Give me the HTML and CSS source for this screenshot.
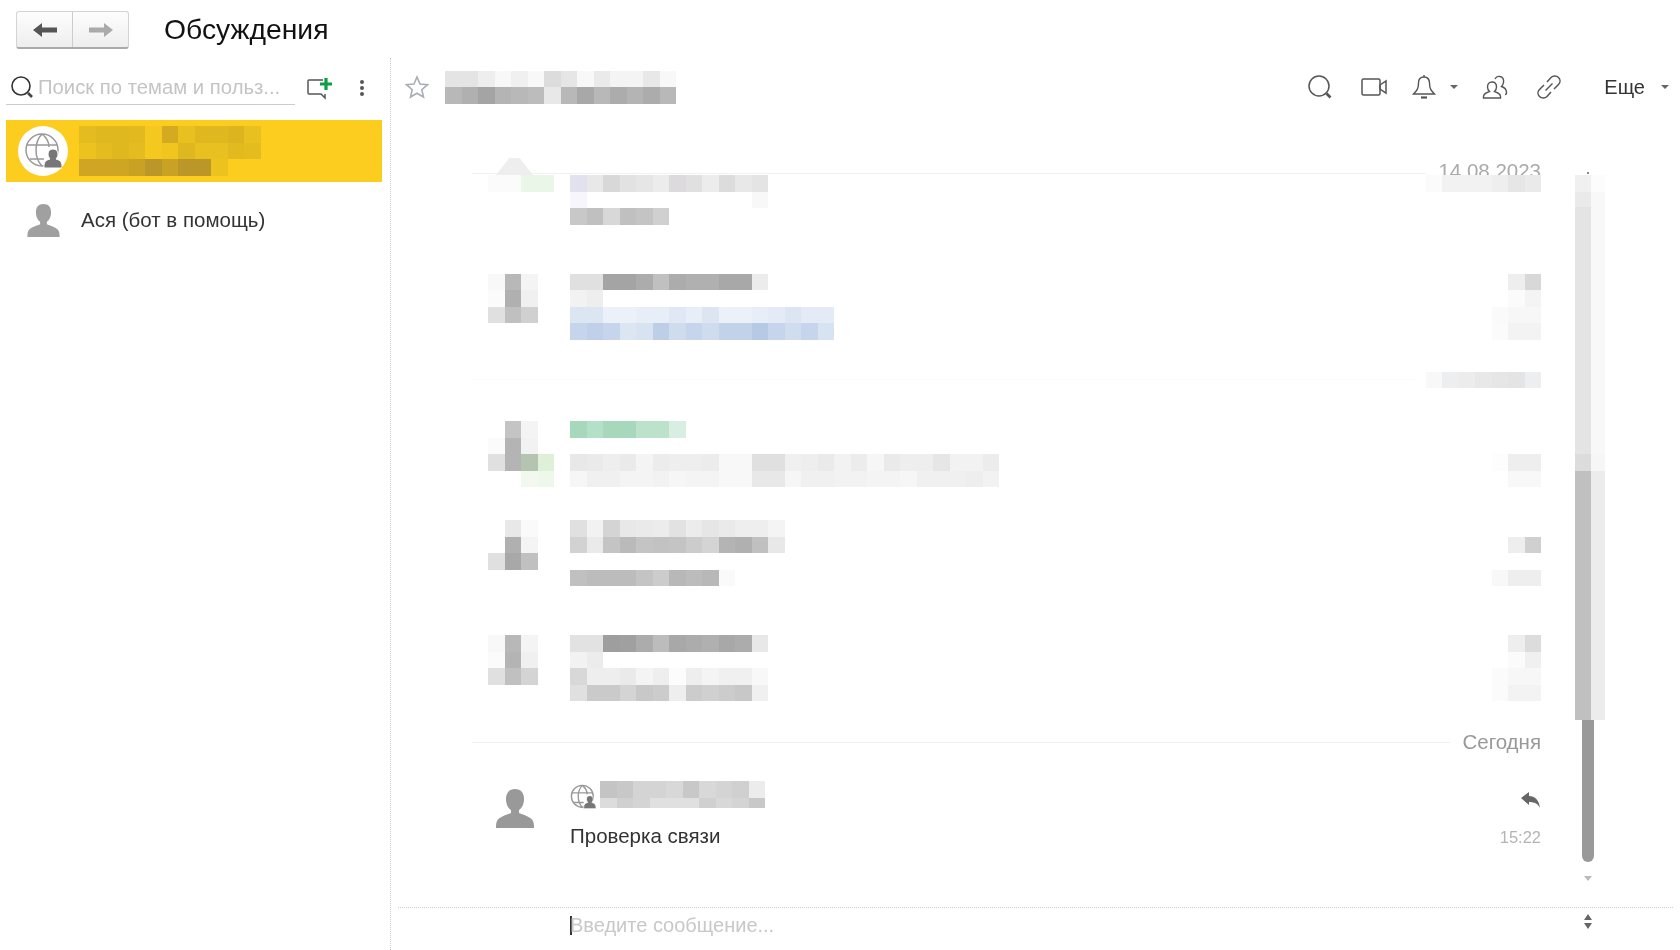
FILE: index.html
```html
<!DOCTYPE html>
<html lang="ru">
<head>
  <meta charset="UTF-8" />
  <title>Обсуждения</title>
  <link rel="stylesheet" href="styles.css">
</head>
<body>
  <header class="topbar">
    <div class="nav-buttons">
      <button class="nav-btn">
        <svg width="26" height="18" viewBox="0 0 26 18"><path d="M1 9l9-7v4.500h15v5H10V16z" fill="#555"/></svg>
      </button>
      <button class="nav-btn">
        <svg width="26" height="18" viewBox="0 0 26 18"><path d="M25 9l-9-7v4.500H1v5h15V16z" fill="#aaa"/></svg>
      </button>
    </div>
    <h1 class="title">Обсуждения</h1>
  </header>

  <div class="layout">
    <aside class="sidebar">
      <div class="search-row">
        <div class="search">
          <svg width="24" height="24" viewBox="0 0 24 24" fill="none"><circle cx="11" cy="11" r="9" stroke="#333" stroke-width="1.600"/><path d="M18 18l4 4" stroke="#444" stroke-width="2.600"/></svg>
          <span class="placeholder">Поиск по темам и польз...</span>
        </div>
        <svg class="new-chat" width="28" height="28" viewBox="0 0 28 28" fill="none"><path d="M17 6H3a1 1 0 0 0-1 1v12a1 1 0 0 0 1 1h12l4 4v-4" stroke="#555" stroke-width="1.500"/><path d="M20 4v12M14 10h12" stroke="#0f9d48" stroke-width="3.200"/></svg>
        <svg class="dots" width="6" height="18" viewBox="0 0 6 18"><circle cx="3" cy="3" r="2" fill="#555"/><circle cx="3" cy="9" r="2" fill="#555"/><circle cx="3" cy="15" r="2" fill="#555"/></svg>
      </div>

      <div class="chat-item selected">
        <div class="globe-circle">
          <svg width="38" height="38" viewBox="0 0 38 38" fill="none" stroke="#999" stroke-width="1.500"><circle cx="18" cy="18" r="16"/><path d="M3 13h30M6 27h14M18 2c-8 8-8 24 0 32M18 2c5 4 7 9 7 13"/><path d="M29 17c-3 0-5 2-5 5 0 2 1 4 2 5-3 1-6 2-6 7v2h18v-2c0-5-3-6-6-7 1-1 2-3 2-5 0-3-2-5-5-5z" fill="#777" stroke="#fff" stroke-width="1"/></svg>
        </div>
        <div class="mosaic" data-cells="e4bc20 dfb820 dfb820 e2ba20 f4c81e d4aa20 e8c020 dfb820 dfb820 dcb420 e8c020|ecc21f e4bc20 dfb820 e4bc20 f4c81e f0c61e dfb820 e8c020 e8c020 e2ba20 e4bc20|cfa624 cfa624 cfa624 c9a125 bb9628 c9a125 bb9628 bb9628 ecc21f"></div>
      </div>

      <div class="chat-item">
        <svg class="person" width="33" height="33" viewBox="0 0 38 39"><path d="M19 0c-6 0-9 4-9 10 0 5 2 9 5 11v3c-5 2-12 4-14 8-1 2-1 5-1 7h38c0-2 0-5-1-7-2-4-9-6-14-8v-3c3-2 5-6 5-11 0-6-3-10-9-10z" fill="#a0a0a0"/></svg>
        <span class="chat-name">Ася (бот в помощь)</span>
      </div>
    </aside>

    <main class="chat">
      <div class="chat-toolbar">
        <svg class="star" width="24" height="24" viewBox="0 0 24 24"><path d="M12 2l3 7 7.500.7-5.700 5 1.700 7.300L12 18.200 5.500 22l1.700-7.300-5.700-5L9 9z" fill="none" stroke="#a9adb5" stroke-width="1.600"/></svg>
        <div class="mosaic" data-cells="e4 e4 ee f8 f0 f8 dc e6 f8 ea f4 f4 e8 f8|b8 b0 a4 b4 b8 bc e8 b8 a8 b8 ac b4 ac b8"></div>

        <div class="tools">
          <svg class="tool" width="26" height="26" viewBox="0 0 26 26" fill="none"><circle cx="12" cy="12" r="10" stroke="#555" stroke-width="1.500"/><path d="M19.500 19.500l4 4" stroke="#555" stroke-width="2.600"/></svg>
          <svg class="tool" width="26" height="26" viewBox="0 0 26 26" fill="none" stroke="#555" stroke-width="1.500"><rect x="1" y="5" width="18" height="16" rx="1.500"/><path d="M19 11l6-4v12l-6-4z"/></svg>
          <svg class="tool tool-bell" width="26" height="26" viewBox="0 0 26 26" fill="none" stroke="#555" stroke-width="1.400"><path d="M13 3c-3.500 0-5.500 2.500-5.500 6 0 6-2 8-5 11h21c-3-3-5-5-5-11 0-3.500-2-6-5.500-6z"/><path d="M13 1v2"/><path d="M10 23.500h6" stroke-width="2.200"/></svg>
          <span class="caret caret-bell"></span>
          <svg class="tool tool-users" width="26" height="26" viewBox="0 0 26 26" fill="none" stroke="#555" stroke-width="1.400"><path d="M10 8c-3 0-4.500 2-4.500 5 0 2 1 3.500 2 4.500-3 1-6 2-6 5v1.500h17V22.500c0-3-3-4-6-5 1-1 2-2.500 2-4.500 0-3-1.500-5-4.500-5z"/><path d="M13 5c1-2 3-3 5-2.500 3 .5 4 3 3.500 6-.3 2-1 3-2 4 3 1 5 3 5 6 0 1-.5 2-1.500 2"/></svg>
          <svg class="tool tool-link" width="26" height="26" viewBox="0 0 26 26" fill="none" stroke="#555" stroke-width="1.500"><path d="M11 8l4-4.500c2-2 5.500-2 7.500 0s2 5 0 7L18 15"/><path d="M15 18l-4 4.500c-2 2-5.500 2-7.500 0s-2-5 0-7L8 11"/><path d="M9.500 16.500l7-7"/></svg>
          <span class="more">Еще</span>
          <span class="caret caret-more"></span>
        </div>
      </div>

      <div class="chat-body">
        <div class="messages">
          <div class="date-row first">
            <span class="date-line"></span>
            <span class="date-label">14.08.2023</span>
            <span class="avatar-top"></span>
          </div>

          <div class="msg">
            <div class="mosaic msg-avatar" data-cells="fb fb eaf6e8 eaf6e8"></div>
            <div class="msg-body">
              <div class="mosaic" data-cells="e2e2ee e8 d8 e2 e6 ec dcdadc e0 ec dc e8 e4|f6f6fc . . . . . . . . . . f8|c8 c0 d8 c0 c4 d0"></div>
            </div>
            <div class="mosaic msg-side" data-cells="fb f2 f2 f2 ee e6 ea"></div>
          </div>

          <div class="msg gap-lg">
            <div class="mosaic msg-avatar" data-cells="f8 b8 f4|fb b0 f0|e0 c0 d0"></div>
            <div class="msg-body">
              <div class="mosaic" data-cells="e0 e0 a4 a4 ac c0 ac b0 b0 a8 a8 ec|f2 ee|dce6f2 dce6f2 ecf0f8 ecf0f8 e8eef7 e8eef7 dfe8f4 e8eef7 dce6f2 ecf0f8 ecf0f8 e8eef7 e4ebf6 dce6f2 e4ebf6 e4ebf6|c6d5eb bfd0e8 c6d5eb dce6f2 d8e3f1 bdcee7 cfdcee c6d5eb cfdcee c2d2e9 c2d2e9 b6c9e5 c6d5eb d0ddef c6d5eb d8e3f1"></div>
            </div>
            <div class="mosaic msg-side" data-cells=". ee d8|. fb f4|fa f7 f7|fb f3 f3"></div>
          </div>

          <div class="date-row second">
            <span class="date-line faint"></span>
            <div class="mosaic" data-cells="f8 eceef0 ec e8 e6 e4 eceef0"></div>
          </div>

          <div class="msg gap-md">
            <div class="mosaic msg-avatar" data-cells=". c4 f4 .|fb b4 f2 .|e0 b4 b4c4b0 def0d8|. . f2f8ee eef8ea"></div>
            <div class="msg-body">
              <div class="mosaic" data-cells="a8d8bc b4dfc8 a8d8bc a8d8bc bce2cc bce2cc d8eee2|. . . . . . .|e8 ea ee ea f4 ec ee ee ec f8 f8 e0 e0 f0 ee ea f2 ec f6 ea ee ee e6 f2 f2 ec|f6 f0 f0 f4 f4 f2 f6 f4 f4 f8 f8 e8 e8 f6 f0 f0 f2 f2 f4 f4 f6 f0 f0 f0 ee f2"></div>
            </div>
            <div class="mosaic msg-side" data-cells=". . .|. . .|fd ee ee|. f8 f8"></div>
          </div>

          <div class="msg gap-md">
            <div class="mosaic msg-avatar" data-cells=". e8 fa|. b0 f4|e0 a8 c0"></div>
            <div class="msg-body">
              <div class="mosaic" data-cells="e0 f2 d4 e8 ea ec e2 ec e6 ea ee ee f4|d2 ea c4 ba c4 c2 c4 cc d4 b4 b0 c0 e8|. . . . . . . . . . . . .|c0 bc bc bc c4 cc b8 bc b8 fa"></div>
            </div>
            <div class="mosaic msg-side" data-cells=". . .|. ee d0|. . .|f8 ee ee"></div>
          </div>

          <div class="msg gap-lg">
            <div class="mosaic msg-avatar" data-cells="f8 b8 f4|fb b4 f0|e0 c0 d4"></div>
            <div class="msg-body">
              <div class="mosaic" data-cells="e2 e2 9e a0 ac bc a8 ac b0 a8 ac e8|f2 ec|d8 ee ee ea f4 ee fc ee f4 f0 f0 f8|e0 ca ca d4 c8 cc ee cc d0 cc c8 f0"></div>
            </div>
            <div class="mosaic msg-side" data-cells=". ee dc|. fb f0|fb f7 f7|fb f3 f3"></div>
          </div>

          <div class="date-row today">
            <span class="date-line"></span>
            <span class="date-label">Сегодня</span>
          </div>

          <div class="msg last">
            <svg class="msg-person" width="38" height="39" viewBox="0 0 38 39"><path d="M19 0c-6 0-9 4-9 10 0 5 2 9 5 11v3c-5 2-12 4-14 8-1 2-1 5-1 7h38c0-2 0-5-1-7-2-4-9-6-14-8v-3c3-2 5-6 5-11 0-6-3-10-9-10z" fill="#999"/></svg>
            <div class="msg-body">
              <div class="msg-head">
                <svg class="msg-globe" width="26" height="26" viewBox="0 0 38 38" fill="none" stroke="#999" stroke-width="2"><circle cx="18" cy="18" r="16"/><path d="M3 13h30M6 27h14M18 2c-8 8-8 24 0 32M18 2c5 4 7 9 7 13"/><path d="M29 17c-3 0-5 2-5 5 0 2 1 4 2 5-3 1-6 2-6 7v2h18v-2c0-5-3-6-6-7 1-1 2-3 2-5 0-3-2-5-5-5z" fill="#777" stroke="#fff" stroke-width="1"/></svg>
                <div class="mosaic short" data-cells="c4 c8 d4 d4 d8 c8 d8 d4 d0 ec|dc d0 d4 e0 e0 e0 d0 d8 d4 c8"></div>
              </div>
              <p class="msg-text">Проверка связи</p>
            </div>
            <div class="msg-meta">
              <svg width="20" height="18" viewBox="0 0 20 18"><path d="M0 7l8-6v4c6 0 10 4 11 12-2-4-5-6-11-6v3z" fill="#666"/></svg>
              <span class="msg-time">15:22</span>
            </div>
          </div>
        </div>

        <div class="scrollbar">
          <span class="dot-up"></span>
          <div class="seg seg-a"></div>
          <div class="seg seg-b"></div>
          <div class="seg seg-c"></div>
          <div class="seg seg-d"></div>
          <div class="seg seg-e"></div>
          <div class="thumb"></div>
          <span class="arrow-down"></span>
        </div>
      </div>

      <div class="input-row">
        <span class="cursor"></span>
        <span class="input-placeholder">Введите сообщение...</span>
        <div class="spinner"><span class="spin-up"></span><span class="spin-down"></span></div>
      </div>
    </main>
  </div>

  <script src="script.js"></script>
</body>
</html>
```

FILE: styles.css
```css
* {
  margin: 0;
  padding: 0;
  box-sizing: border-box;
}

body {
  height: 100vh;
  overflow: hidden;
  background: #fff;
  color: #333;
  font-family: "Liberation Sans", Arial, sans-serif;
  display: flex;
  flex-direction: column;
}

.topbar {
  height: 58px;
  display: flex;
  align-items: flex-start;
  padding: 11px 0 0 16px;
  filter: blur(0.4px);
}

.nav-buttons {
  display: flex;
  width: 113px;
  height: 38px;
  border: 1px solid #d4d4d4;
  border-bottom: 2px solid #aaa;
  border-radius: 3px;
  background: linear-gradient(#fdfdfd, #eee);
}

.nav-btn {
  flex: 1;
  border: none;
  background: none;
  display: flex;
  align-items: center;
  justify-content: center;
}

.nav-btn + .nav-btn {
  border-left: 1px solid #ccc;
}

.title {
  margin: 0 0 0 35px;
  font-size: 28.300px;
  line-height: 36px;
  font-weight: normal;
  color: #111;
}

.layout {
  flex: 1;
  display: flex;
  min-height: 0;
  filter: blur(0.4px);
}

.sidebar {
  width: 391px;
  border-right: 1px dotted #ccc;
  padding: 12px 8px 0 6px;
}

.search-row {
  display: flex;
  align-items: center;
  height: 35px;
}

.search {
  width: 289px;
  height: 35px;
  display: flex;
  align-items: center;
  gap: 4px;
  padding-left: 4px;
  border-bottom: 1px solid #ccc;
}

.placeholder {
  font-size: 20.300px;
  color: #c4c4c4;
  white-space: nowrap;
}

.new-chat {
  margin-left: 11px;
}

.dots {
  margin-left: 25px;
}

.chat-item {
  display: flex;
  align-items: center;
  height: 76px;
}

.chat-item.selected {
  height: 62px;
  margin-top: 15px;
  background: #fccc1e;
  padding-left: 12px;
  gap: 11px;
}

.globe-circle {
  width: 50px;
  height: 50px;
  border-radius: 50%;
  background: #fff;
  display: flex;
  align-items: center;
  justify-content: center;
}

.person {
  margin-left: 21px;
}

.chat-name {
  margin-left: 21px;
  font-size: 20.500px;
  color: #333;
}

.chat {
  flex: 1;
  min-width: 0;
  display: flex;
  flex-direction: column;
}

.chat-toolbar {
  height: 58px;
  flex-shrink: 0;
  display: flex;
  align-items: center;
  padding: 0 11px 0 14px;
}

.star {
  margin-right: 16px;
}

.tools {
  margin-left: auto;
  display: flex;
  align-items: center;
}

.tool {
  margin-left: 28px;
}

.tool-bell,
.tool-users {
  margin-left: 24px;
}

.caret {
  width: 0;
  height: 0;
  border-left: 4px solid transparent;
  border-right: 4px solid transparent;
  border-top: 4px solid #666;
}

.caret-bell {
  margin-left: 13px;
}

.tool-link {
  margin-left: 28px;
}

.more {
  margin-left: 42px;
  font-size: 20px;
}

.caret-more {
  margin-left: 16px;
}

.mosaic {
  display: grid;
  grid-auto-rows: 16.5px;
  grid-auto-columns: 16.5px;
  filter: blur(0.5px);
}

.mosaic span {
  display: block;
}

.chat-body {
  flex: 1;
  min-height: 0;
  display: flex;
  padding: 42px 75px 0 81px;
}

.messages {
  flex: 1;
  min-width: 0;
}

.date-row {
  position: relative;
  display: flex;
  align-items: center;
  justify-content: flex-end;
  gap: 12px;
  color: #999;
  font-size: 20.500px;
}

.date-line {
  flex: 1;
  height: 1px;
  background: #f1f1f1;
}

.date-line.faint {
  background: #fbfbfb;
}

.date-row.first {
  height: 17px;
  align-items: flex-start;
  overflow: hidden;
}

.date-row.first .date-line {
  margin-top: 15px;
}

.date-row.first .date-label {
  line-height: 25px;
  color: #aaa;
}

.avatar-top {
  position: absolute;
  left: 24px;
  top: 0;
  width: 37px;
  height: 17px;
  background: #eee;
  clip-path: polygon(50% 0, 64% 0, 100% 100%, 0 100%, 36% 0);
}

.date-row.second {
  margin-top: 32px;
}

.date-row.today {
  height: 20px;
  margin-top: 31px;
}

.msg {
  display: flex;
  align-items: flex-start;
  padding-left: 16px;
}

.gap-lg {
  margin-top: 49px;
}

.gap-md {
  margin-top: 33px;
}

.msg.last {
  margin-top: 29px;
}

.msg-avatar {
  width: 82px;
  flex-shrink: 0;
}

.msg-person {
  flex-shrink: 0;
  margin: 8px 36px 0 8px;
}

.msg-body {
  flex: 1;
  min-width: 0;
}

.msg-head {
  display: flex;
  align-items: flex-end;
  height: 27px;
  gap: 4px;
}

.msg-globe {
  margin-bottom: -2px;
}

.short {
  height: 27px;
  overflow: hidden;
}

.msg-text {
  margin-top: 16px;
  font-size: 20.500px;
  line-height: 24px;
  color: #333;
}

.msg-meta {
  display: flex;
  flex-direction: column;
  align-items: flex-end;
  padding-top: 10px;
}

.msg-time {
  margin-top: 16px;
  font-size: 16.500px;
  line-height: 24px;
  color: #b4b4b4;
}

.scrollbar {
  width: 30px;
  margin-left: 34px;
  padding-top: 17px;
  position: relative;
  flex-shrink: 0;
}

.dot-up {
  position: absolute;
  left: 12px;
  top: 14px;
  width: 2px;
  height: 2px;
  background: #888;
}

.seg {
  width: 30px;
}

.seg-a {
  height: 17px;
  background: linear-gradient(to right, #f0f0f0 16px, #fcfcfc 16px);
}

.seg-b {
  height: 15px;
  background: linear-gradient(to right, #eaeaea 16px, #f8f8f8 16px);
}

.seg-c {
  height: 247px;
  background: linear-gradient(to right, #e4e4e4 16px, #f8f8f8 16px);
}

.seg-d {
  height: 17px;
  background: linear-gradient(to right, #dcdcdc 16px, #f6f6f6 16px);
}

.seg-e {
  height: 249px;
  background: linear-gradient(to right, #c0c0c0 16px, #ececec 16px);
}

.thumb {
  width: 12px;
  height: 142px;
  margin-left: 7px;
  background: #999;
  border-radius: 0 0 6px 6px;
}

.arrow-down {
  display: block;
  width: 0;
  margin: 14px 0 0 9px;
  border-left: 4px solid transparent;
  border-right: 4px solid transparent;
  border-top: 5px solid #bbb;
}

.input-row {
  height: 43px;
  flex-shrink: 0;
  margin: 0 7px;
  border-top: 1px dotted #ccc;
  display: flex;
  align-items: center;
  padding: 0 0 7px 172px;
  position: relative;
}

.cursor {
  width: 2px;
  height: 19px;
  background: #333;
}

.input-placeholder {
  font-size: 20px;
  color: #c8c8c8;
  margin-left: -2px;
}

.spinner {
  position: absolute;
  left: 1186px;
  top: 6px;
  display: flex;
  flex-direction: column;
  gap: 3px;
}

.spin-up,
.spin-down {
  width: 0;
  border-left: 4px solid transparent;
  border-right: 4px solid transparent;
}

.spin-up {
  border-bottom: 6px solid #666;
}

.spin-down {
  border-top: 6px solid #666;
}
```

FILE: script.js
```js
// builds the pixelated (censored) blocks from their data-cells lists
const toColor = (token) => {
  if (token === '.') return 'transparent';
  return token.length === 2 ? `#${token}${token}${token}` : `#${token}`;
};

document.querySelectorAll('.mosaic').forEach((mosaic) => {
  mosaic.dataset.cells.split('|').forEach((row, rowIndex) => {
    row.split(' ').forEach((token, colIndex) => {
      const cell = document.createElement('span');
      cell.style.gridRow = rowIndex + 1;
      cell.style.gridColumn = colIndex + 1;
      cell.style.background = toColor(token);
      mosaic.appendChild(cell);
    });
  });
});
```
